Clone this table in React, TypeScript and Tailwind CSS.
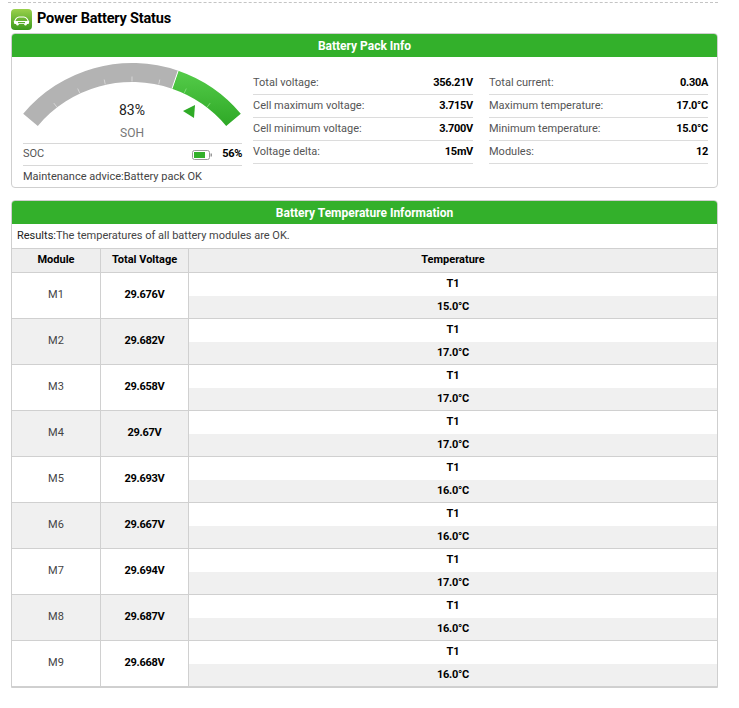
import React from "react";

const packLeft = [
  { label: "Total voltage:", value: "356.21V" },
  { label: "Cell maximum voltage:", value: "3.715V" },
  { label: "Cell minimum voltage:", value: "3.700V" },
  { label: "Voltage delta:", value: "15mV" },
];

const packRight = [
  { label: "Total current:", value: "0.30A" },
  { label: "Maximum temperature:", value: "17.0°C" },
  { label: "Minimum temperature:", value: "15.0°C" },
  { label: "Modules:", value: "12" },
];

const modules = [
  { name: "M1", voltage: "29.676V", temp: "15.0°C" },
  { name: "M2", voltage: "29.682V", temp: "17.0°C" },
  { name: "M3", voltage: "29.658V", temp: "17.0°C" },
  { name: "M4", voltage: "29.67V", temp: "17.0°C" },
  { name: "M5", voltage: "29.693V", temp: "16.0°C" },
  { name: "M6", voltage: "29.667V", temp: "16.0°C" },
  { name: "M7", voltage: "29.694V", temp: "17.0°C" },
  { name: "M8", voltage: "29.687V", temp: "16.0°C" },
  { name: "M9", voltage: "29.668V", temp: "16.0°C" },
];

function CarIcon() {
  return (
    <svg width="21" height="21" viewBox="0 0 21 21">
      <defs>
        <linearGradient id="icg" x1="0" y1="0" x2="0" y2="1">
          <stop offset="0" stopColor="#9ad14b" />
          <stop offset="1" stopColor="#3c9a1c" />
        </linearGradient>
      </defs>
      <rect x="0" y="0" width="21" height="21" rx="4" fill="url(#icg)" />
      <path d="M3.5 12.5 L5 9.8 Q6 8.2 8 8 L13 8 Q15 8.2 16 9.8 L17.5 12.5 Z" fill="none" stroke="#fff" strokeWidth="1.1" />
      <rect x="3" y="12.3" width="15" height="2.6" rx="1" fill="#fff" />
      <circle cx="6.5" cy="15.2" r="1.2" fill="#fff" />
      <circle cx="14.5" cy="15.2" r="1.2" fill="#fff" />
      <rect x="7" y="13" width="7" height="1.2" fill="#5aad2a" />
    </svg>
  );
}

function Gauge() {
  const cx = 110;
  const cy = 146;
  const ticks: { x1: number; y1: number; x2: number; y2: number; green: boolean }[] = [];
  for (let i = 1; i < 8; i++) {
    const a = ((-50 + i * 12.5) * Math.PI) / 180;
    ticks.push({
      x1: cx + 123.5 * Math.sin(a),
      y1: cy - 123.5 * Math.cos(a),
      x2: cx + 128.5 * Math.sin(a),
      y2: cy - 128.5 * Math.cos(a),
      green: -50 + i * 12.5 > 19,
    });
  }
  return (
    <svg width="222" height="82" viewBox="0 0 222 82" className="-ml-px">
      <defs>
        <linearGradient id="gg" x1="0" y1="0" x2="0" y2="1">
          <stop offset="0" stopColor="#55cc4a" />
          <stop offset="1" stopColor="#2ea826" />
        </linearGradient>
      </defs>
      <path d="M1.2 54.7 A142 142 0 0 1 156.2 11.7 L150 29.7 A123 123 0 0 0 15.8 66.9 Z" fill="#b3b3b3" />
      <path d="M156.2 11.7 A142 142 0 0 1 218.8 54.7 L204.2 66.9 A123 123 0 0 0 150 29.7 Z" fill="url(#gg)" />
      <line x1="156.2" y1="11.7" x2="150" y2="29.7" stroke="#ffffff" strokeWidth="1" />
      {ticks.map((t, i) => (
        <line key={i} x1={t.x1} y1={t.y1} x2={t.x2} y2={t.y2} stroke={t.green ? "#7fdc76" : "#d6d6d6"} strokeWidth="1" />
      ))}
      <polygon points="161,52 173,46 172,59" fill="#2fab27" />
      <text x="110" y="56" textAnchor="middle" fontSize="14" fill="#222" fontFamily="Roboto, sans-serif">83%</text>
      <text x="110" y="78" textAnchor="middle" fontSize="12" fill="#777" fontFamily="Roboto, sans-serif">SOH</text>
    </svg>
  );
}

function BatteryIcon() {
  return (
    <svg width="21" height="10" viewBox="0 0 21 10">
      <rect x="0.5" y="0.5" width="17" height="9" rx="2" fill="#fff" stroke="#999" />
      <rect x="2" y="2" width="11" height="6" fill="#33b02b" />
      <rect x="18.5" y="3.5" width="1.5" height="3" fill="#999" />
    </svg>
  );
}

function InfoColumn({ rows, width }: { rows: { label: string; value: string }[]; width: string }) {
  return (
    <div className={`${width} pt-[15px]`}>
      {rows.map((r) => (
        <div key={r.label} className="h-[23px] flex items-center justify-between border-b border-[#dcdcdc] text-[11px]">
          <span className="text-[#555]">{r.label}</span>
          <span className="font-bold text-black tracking-[-0.3px]">{r.value}</span>
        </div>
      ))}
    </div>
  );
}

export default function App() {
  return (
    <div className="bg-white w-[739px] h-[708px] overflow-hidden" style={{ fontFamily: "Roboto, 'Liberation Sans', sans-serif" }}>
      <div className="ml-[8px] w-[710px] mt-[2px] border-t border-dashed border-[#c4c4c4]"></div>
      <div className="ml-[11px] w-[707px]">
        <div className="h-[28px] flex items-center gap-[5px] pt-[4px]">
          <CarIcon />
          <span className="text-[14.5px] font-bold text-black tracking-[-0.2px]">Power Battery Status</span>
        </div>

        <div className="mt-[2px] border border-[#cfcfcf] rounded-[4px] overflow-hidden h-[155px]">
          <div className="h-[23px] bg-[#33b02b] text-white font-bold text-[12px] flex items-center justify-center">
            Battery Pack Info
          </div>
          <div className="flex pl-[11px]">
            <div className="w-[219px] flex flex-col">
              <div className="pt-[2px] h-[86px]">
                <Gauge />
              </div>
              <div className="h-[23px] border-t border-b border-[#d8d8d8] flex items-center text-[11px]">
                <span className="text-[#555] flex-1">SOC</span>
                <BatteryIcon />
                <span className="font-bold text-black ml-[9px] tracking-[-0.3px]">56%</span>
              </div>
              <div className="h-[23px] flex items-center text-[11px] text-[#444]">
                Maintenance advice:Battery pack OK
              </div>
            </div>
            <div className="w-[11px]"></div>
            <InfoColumn rows={packLeft} width="w-[220px]" />
            <div className="w-[16px]"></div>
            <InfoColumn rows={packRight} width="w-[219px]" />
          </div>
        </div>

        <div className="mt-[12px] border border-[#cfcfcf] rounded-t-[4px] overflow-hidden">
          <div className="h-[23px] bg-[#33b02b] text-white font-bold text-[12px] flex items-center justify-center">
            Battery Temperature Information
          </div>
          <div className="h-[25px] flex items-center px-[5px] text-[11px] text-[#444] border-b border-[#d0d0d0]">
            <span className="text-[#222]">Results:</span>
            <span>The temperatures of all battery modules are OK.</span>
          </div>
          <div className="flex h-[24px] bg-[#eeeeee] border-b border-[#d0d0d0] text-[11px] font-bold text-black">
            <div className="w-[89px] border-r border-[#d0d0d0] flex items-center justify-center">Module</div>
            <div className="w-[88px] border-r border-[#d0d0d0] flex items-center justify-center">Total Voltage</div>
            <div className="flex-1 flex items-center justify-center">Temperature</div>
          </div>
          {modules.map((m, i) => (
            <div key={m.name} className={`flex h-[46px] border-b border-[#d0d0d0] text-[11px] ${i % 2 === 1 ? "bg-[#f0f0f0]" : "bg-white"}`}>
              <div className="w-[89px] border-r border-[#d0d0d0] flex items-center justify-center text-[#444]">{m.name}</div>
              <div className="w-[88px] border-r border-[#d0d0d0] flex items-center justify-center font-bold text-black tracking-[-0.3px]">{m.voltage}</div>
              <div className="flex-1 flex flex-col font-bold text-black">
                <div className="h-[23px] bg-white flex items-center justify-center">T1</div>
                <div className="h-[22px] bg-[#f0f0f0] flex items-center justify-center tracking-[-0.3px]">{m.temp}</div>
              </div>
            </div>
          ))}
        </div>
      </div>
    </div>
  );
}
